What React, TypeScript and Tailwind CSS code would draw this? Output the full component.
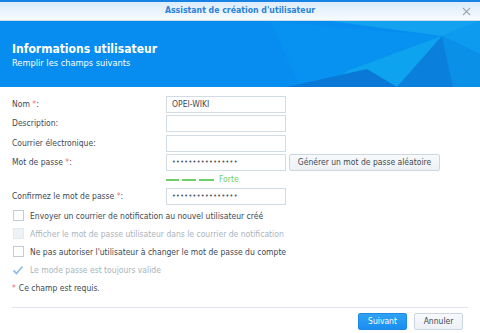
import React from 'react';

const font = "font-['DejaVu_Sans_Condensed','DejaVu_Sans',sans-serif]";

const Req = () => <span className="text-[#f0706a]"> *</span>;

const Dots = () => (
  <span className="text-[7px] tracking-[0.4px] text-[#4a5660]">••••••••••••••••</span>
);

const Label = ({ text, required }: { text: string; required?: boolean }) => (
  <div className="text-[8.5px] text-[#3c4a55] leading-[17px] h-[17px]">
    {text}
    {required && <Req />}:
  </div>
);

const Input = ({ children }: { children?: React.ReactNode }) => (
  <div className="h-[17px] w-[120px] border border-[#d3dbe2] bg-white px-[5px] flex items-center text-[8.5px] text-[#3c4a55]">
    {children}
  </div>
);

const Check = ({ label, checked, disabled }: { label: string; checked?: boolean; disabled?: boolean }) => (
  <div className="flex items-center h-[18px] gap-[6px]">
    {checked ? (
      <svg width="12" height="12" viewBox="0 0 12 12" className="shrink-0">
        <path d="M1.5 6.5 L4.5 9.5 L10.5 2.5" fill="none" stroke="#8fbfe8" strokeWidth="1.8" />
      </svg>
    ) : (
      <div className={`w-[11px] h-[11px] ml-[1px] shrink-0 border ${disabled ? 'border-[#e3e9ee] bg-[#eef2f5]' : 'border-[#c2ccd4] bg-white'}`} />
    )}
    <span className={`text-[8.5px] ${disabled ? 'text-[#a9b4bd]' : 'text-[#3c4a55]'}`}>{label}</span>
  </div>
);

export default function App() {
  return (
    <div className={`w-[480px] h-[333px] bg-white flex flex-col border-t-2 border-[#1783e2] ${font}`}>
      {/* title bar */}
      <div className="h-[19px] shrink-0 relative flex items-center justify-center bg-gradient-to-b from-[#dcecfb] to-[#f7fbff] border-b border-[#cfdbe6]">
        <span className="text-[8.7px] font-bold text-[#2b82d6]">Assistant de création d'utilisateur</span>
        <svg width="9" height="9" viewBox="0 0 9 9" className="absolute right-[9px] top-[5px]">
          <path d="M1 1 L8 8 M8 1 L1 8" stroke="#a0a8b0" strokeWidth="1.1" />
        </svg>
      </div>

      {/* banner */}
      <div className="h-[66px] shrink-0 relative bg-[#068def] overflow-hidden">
        <svg className="absolute inset-0" width="480" height="66" viewBox="0 22 480 66">
          <polygon points="270,22 442,37 367,70 347,88 300,88" fill="#0995f0" opacity="0.6" />
          <polygon points="330,22 480,22 442,37" fill="#12a2ef" />
          <polygon points="442,37 480,22 480,55" fill="#0c9bef" />
          <polygon points="347,72 442,37 397,88 330,88" fill="#0da3ee" />
          <polygon points="442,37 453,88 397,88" fill="#0a80dc" />
          <polygon points="442,37 480,55 480,88 453,88" fill="#0a90e6" />
          <polygon points="287,88 367,70 397,88" fill="#0a78d6" />
        </svg>
        <div className="relative pl-[12px] pt-[21px] text-white">
          <div className="text-[12px] font-bold leading-[15px]">Informations utilisateur</div>
          <div className="text-[9.2px] leading-[11px]">Remplir les champs suivants</div>
        </div>
      </div>

      {/* form */}
      <div className="flex-1 px-[12px] pt-[9px] flex flex-col">
        <div className="grid grid-cols-[154px_auto] gap-y-[2.4px] items-center">
          <Label text="Nom" required />
          <Input>OPEI-WIKI</Input>
          <Label text="Description" />
          <Input />
          <Label text="Courrier électronique" />
          <Input />
          <Label text="Mot de passe" required />
          <div className="flex items-center gap-[3px]">
            <Input>
              <Dots />
            </Input>
            <button className="h-[17px] w-[151px] border border-[#ccd6df] bg-gradient-to-b from-[#f7f9fb] to-[#edf1f5] rounded-[2px] text-[8.5px] text-[#3c4a55]">
              Générer un mot de passe aléatoire
            </button>
          </div>
          <div className="h-[12px]" />
          <div className="flex items-center h-[12px] gap-[4px]">
            <div className="flex gap-[3px]">
              <div className="w-[13px] h-[2px] bg-[#6ccf6a]" />
              <div className="w-[14px] h-[2px] bg-[#6ccf6a]" />
              <div className="w-[15px] h-[2px] bg-[#6ccf6a]" />
            </div>
            <span className="text-[8.5px] text-[#6ccf6a] ml-[1px]">Forte</span>
          </div>
          <Label text="Confirmez le mot de passe" required />
          <Input>
            <Dots />
          </Input>
        </div>

        <div className="mt-[2px] flex flex-col">
          <Check label="Envoyer un courrier de notification au nouvel utilisateur créé" />
          <Check label="Afficher le mot de passe utilisateur dans le courrier de notification" disabled />
          <Check label="Ne pas autoriser l'utilisateur à changer le mot de passe du compte" />
          <Check label="Le mode passe est toujours valide" checked disabled />
        </div>

        <div className="text-[8.5px] text-[#3c4a55] mt-[2px] h-[14px] flex items-center">
          <span className="text-[#f0706a] mr-[3px]">*</span>Ce champ est requis.
        </div>

        <div className="mt-[12px] h-px bg-[#dfe5ea]" />

        <div className="flex justify-end gap-[7px] mt-[5px] pr-[5px]">
          <button className="h-[17px] w-[49px] rounded-[2px] bg-gradient-to-b from-[#2fa2f5] to-[#1a8ef0] border border-[#1d8be6] text-white text-[8.5px]">
            Suivant
          </button>
          <button className="h-[17px] w-[49px] rounded-[2px] bg-gradient-to-b from-[#f7f9fb] to-[#edf1f5] border border-[#ccd6df] text-[#3c4a55] text-[8.5px]">
            Annuler
          </button>
        </div>
      </div>
    </div>
  );
}
